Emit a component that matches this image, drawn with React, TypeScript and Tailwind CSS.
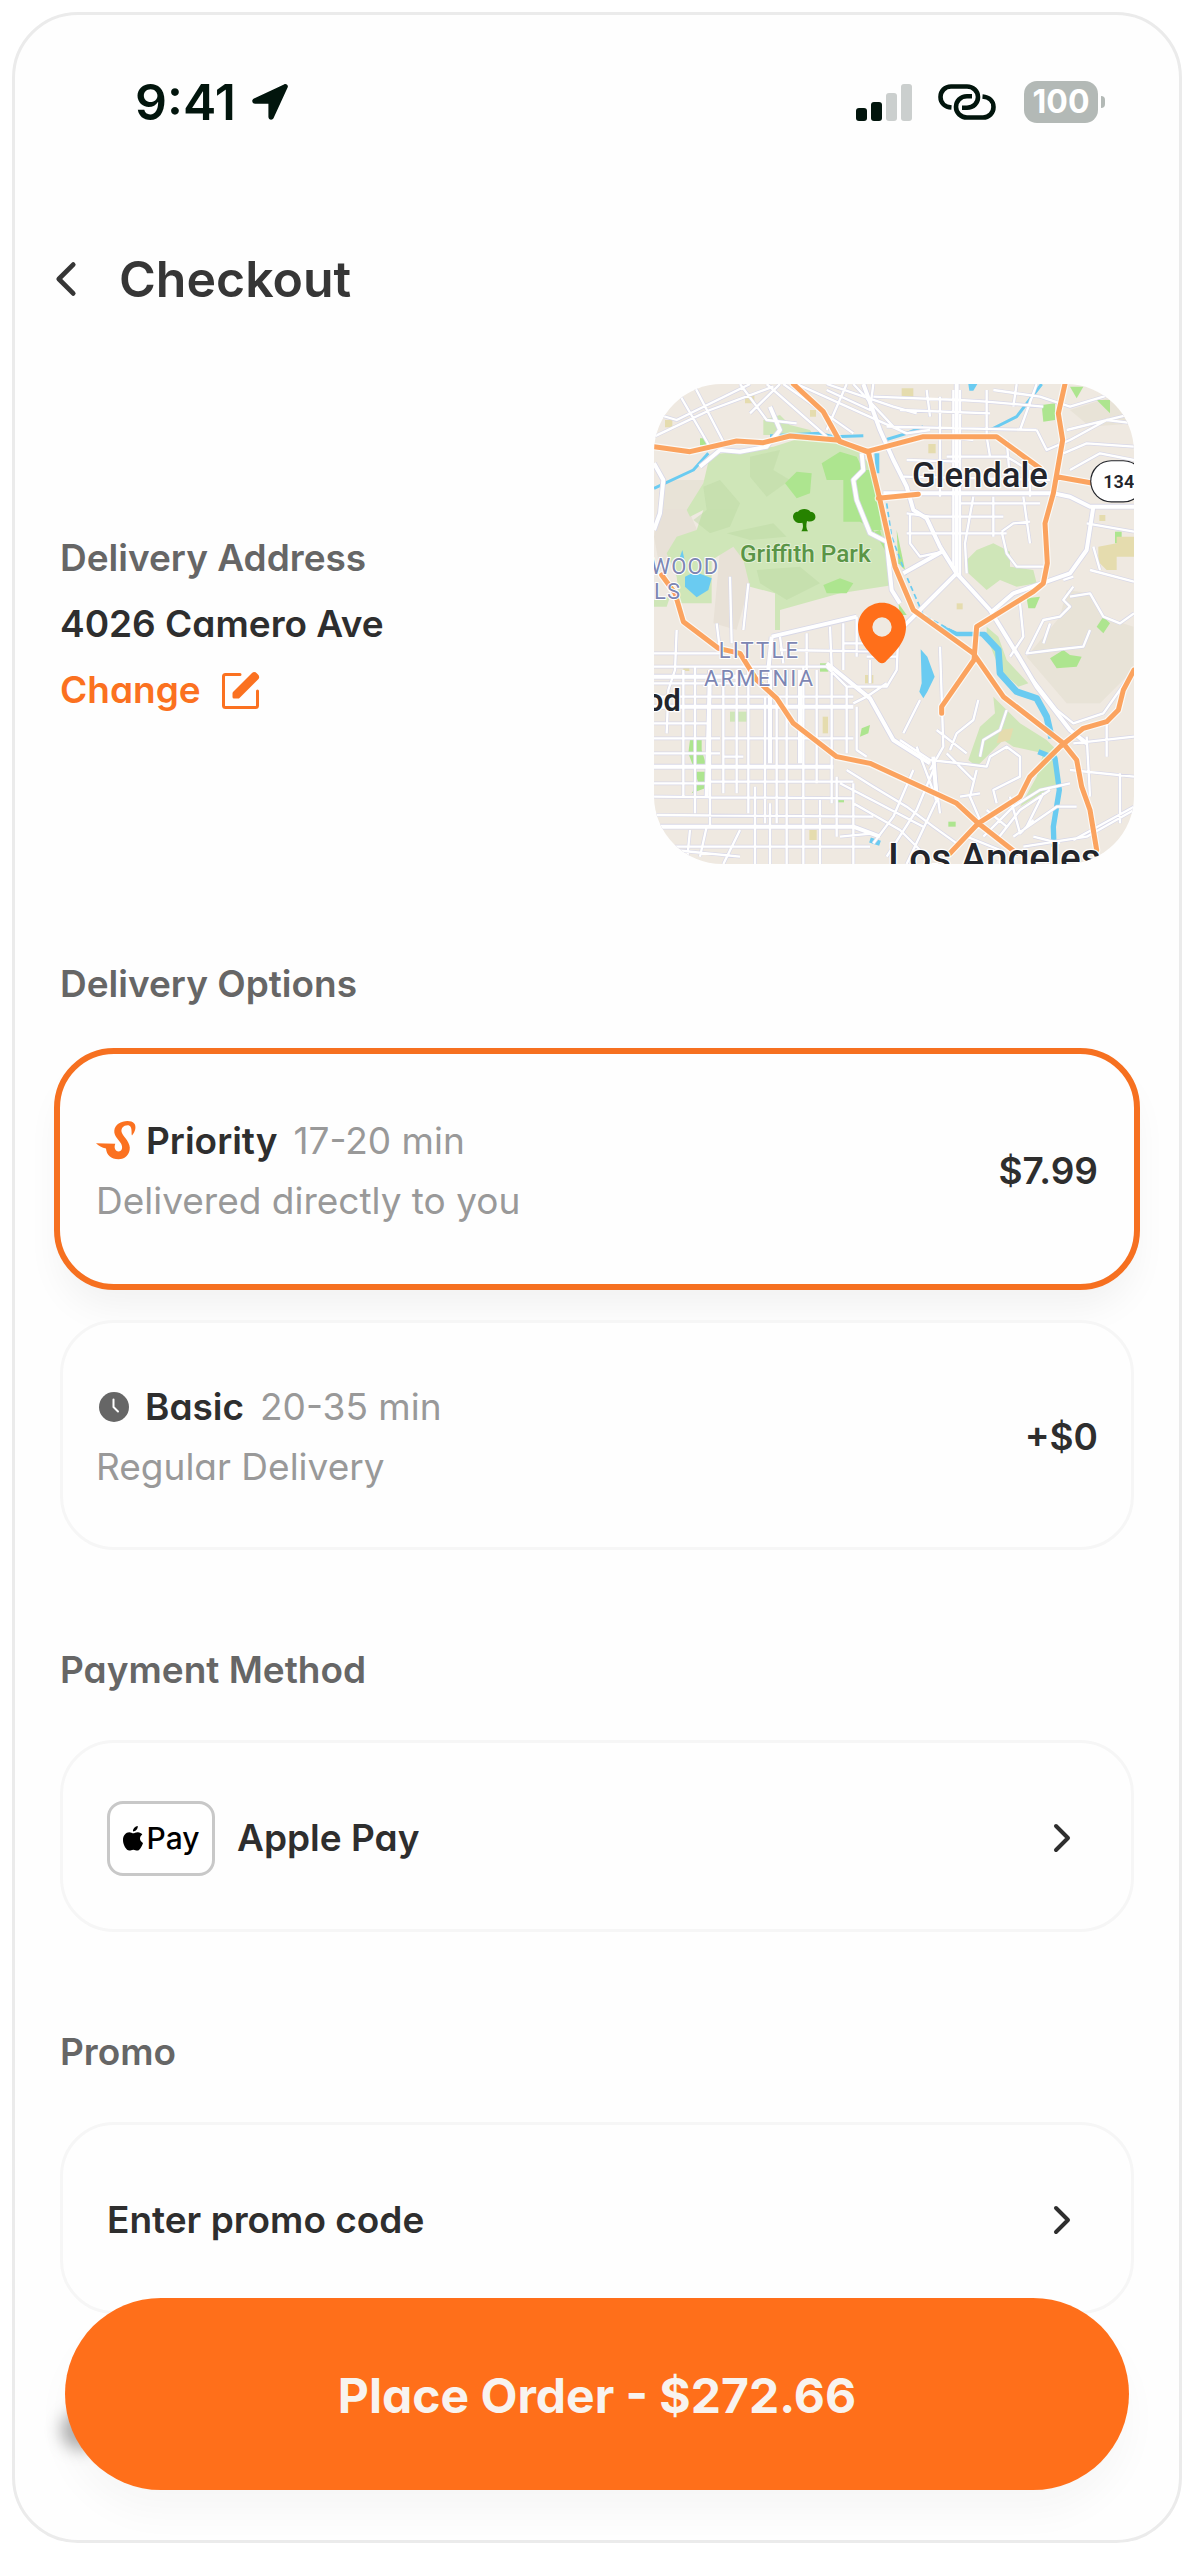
import { useState } from "react";
import type { ReactNode } from "react";

const minorRoads = [
  // northern streets
  "M42 130L110 150L330 42M100 42L215 240M160 42L250 215M42 200L210 120L400 50M300 42L380 150L470 160M380 42L560 200M430 42L640 190M330 130L420 42M470 42L800 190L870 180M560 42L760 110L830 130M620 42L560 180M640 42L760 170M700 42L690 120L560 60",
  "M700 80L960 90L1040 95L1100 100L1210 110M780 120L1050 130M740 170L1190 180M860 60L870 140M1040 60L1040 200M1130 42L1120 110M1190 42L1140 180M1060 60L1200 80L1290 110L1390 80L1482 42",
  "M1280 180L1482 130M1190 180L1220 240L1290 210L1400 150L1482 160M1270 250L1340 220L1482 230M1290 300L1380 250L1482 270",
  // Glendale grid
  "M790 320L1230 330M800 430L870 440L1090 440M800 490L1100 490M960 400L1200 400M1000 380L975 520L980 610M1060 380L1060 500M1150 380L1170 520M1085 485L1120 460L1170 455M1085 485L1100 550L1130 590L1210 590M810 430L810 520L840 560L910 545",
  "M900 80L900 380M960 60L960 620M940 60L940 600M920 200L1000 210M920 260L1100 260L1150 290M800 270L960 275M1040 200L1050 260M1100 210L1110 330M1170 300L1170 380",
  // eastern hills
  "M1300 650L1270 690L1290 710L1260 740L1210 750L1160 850L1240 840L1330 830L1350 780M1290 680L1350 670L1390 740L1440 760L1482 730M1350 600L1482 635M1340 460L1482 485M1360 530L1380 600M1140 700L1150 800L1110 860M1210 820L1230 760M1060 740L1140 690",
  "M1180 930L1250 1020L1300 1060L1390 1030L1482 900M1300 620L1270 630M1400 1060L1400 1160M1340 1100L1350 1280M1300 1120L1482 1100M1290 1200L1482 1220M1440 1210L1440 1360M1300 1410L1482 1310",
  // central blocks
  "M270 620L275 820M325 640L310 780M110 780L105 900L85 960L80 1090M230 760L240 840M42 850L240 850M42 890L560 890M42 940L330 940M42 980L640 980M42 1060L210 1060M42 1105L240 1105M250 1105L640 1105M42 1150L240 1150M250 1160L310 1160M42 1280L640 1285M42 1335L700 1340M42 1240L200 1240",
  "M420 800L430 880M500 790L500 900M570 770L575 890M610 760L610 900M650 740L650 860M680 860L770 860M420 840L740 845M610 820L680 820M560 890L620 950L700 950L740 950L770 900L775 790M690 870L690 940M640 1000L680 980L740 940",
  "M130 900L130 1280M165 890L165 1330M210 960L210 1370M250 900L250 1270M290 900L290 1270M325 900L325 1330M375 980L375 1360M410 990L410 1360M440 900L440 1330M490 890L490 1350M530 900L530 1240M575 900L575 1300M620 950L620 1150M650 1010L650 1140L680 1160",
  "M200 1235L640 1235M345 1250L345 1482M390 1300L390 1482M440 1310L440 1482M490 1280L490 1482M540 1290L540 1482M590 1220L590 1400M640 1240L640 1482M42 1430L690 1430M150 1380L140 1482M200 1370L180 1460M100 1440L300 1460M300 1380L250 1482M600 1400L700 1390",
  // silver lake and Echo Park
  "M840 990L790 1090M900 830L910 1130L870 1200M1015 990L1000 1050L950 1090L930 1140M1100 1020L1080 1080L1030 1110L1020 1160M780 1110L870 1170L960 1180L1040 1190L1050 1160L1100 1130L1140 1160L1140 1220L1060 1260L1070 1300M890 1080L980 1150M830 1130L890 1290M880 1180L900 1330",
  "M620 1200L700 1250L800 1310L880 1370L950 1420M600 1240L850 1370M640 1300L780 1380L840 1440M700 1420L760 1340L820 1200M740 1460L830 1320L880 1200M800 1482L900 1270M1010 1200L990 1280L1020 1350M920 1150L1000 1230M960 1280L1020 1270",
  "M1110 1280L1140 1390L1180 1350M1030 1400L1120 1310L1200 1260L1290 1240M1070 1410L1140 1320L1230 1260M1160 1370L1210 1270M1120 1400L1250 1310L1310 1310M1180 1400L1260 1420M1150 1430L1340 1400L1482 1320M1040 1320L1100 1370M980 1400L1080 1440",
];

const majorRoads = [
  "M42 280L70 330L60 430L42 480M390 110L420 180L380 230L300 245L240 240L180 290",
  "M670 42L720 180L760 270L800 350L820 420L860 445L900 530L950 610L1050 720L1130 850L1190 950L1290 1080L1340 1120",
  "M730 370L1240 370L1290 380L1350 410L1482 410M1360 410L1340 540L1290 610L1120 670L1050 730",
  "M665 250L670 300L640 330L650 390L690 490L740 515L755 660L780 700M950 610L840 720L770 790M905 545L790 610M950 42L950 610",
  "M395 800L650 740M395 800L385 900M560 880L690 985L760 1110L870 1180M42 920L380 920M42 1010L640 1010M42 1190L580 1190M42 1370L640 1370L720 1400M390 900L390 1180M210 900L200 1280M480 900L480 1180M880 1160L890 1290",
];

const freeways = [
  "M42 230L150 245L290 213L370 218L450 198L590 210L680 245L850 200L1070 200L1200 295",
  "M460 42L550 125L600 215L685 245L720 390L765 590L820 720L1000 850L1090 980L1270 1120L1310 1170L1325 1250L1350 1320L1370 1440",
  "M1275 42L1255 130L1268 210L1240 370L1215 460L1222 580L1210 640L1180 665L1010 770L1002 870L905 1010L905 1030",
  "M715 385L835 373M1250 320L1360 340",
  "M65 615L105 670L130 755L235 835L300 850L350 930L410 985L460 1060L590 1160L690 1180L950 1300L1015 1360L1130 1450",
  "M1482 900L1450 960L1435 1020L1400 1055L1330 1075L1260 1130L1170 1220L1140 1280L1015 1360L930 1450",
];

const sandPatches = [
  "M315 75h28v25h-28z", "M785 55h35v25h-35z", "M75 150h22v22h-22z", "M865 222h22v28h-22z",
  "M1375 530L1430 520V500H1482V560H1430V600H1400L1375 575Z", "M130 885h18v18h-18z",
  "M548 1040h16v50h-16z", "M675 915h25v25h-25z", "M1080 1080L1120 1075L1110 1110L1070 1120Z",
  "M508 1380h22v30h-22z", "M950 700h18v18h-18z", "M1378 435h18v18h-18z", "M510 120h18v20h-18z",
];

const parkPatches = [
  "M370 150L420 135L450 165L510 180L520 195L370 195Z",
  "M980 570L1010 540L1060 520L1110 545L1110 590L1180 600L1190 640L1130 650L1080 630L1040 660L985 610Z",
  "M1060 980L1140 1060L1220 1110L1250 1140L1255 1240L1140 1310L1190 1220L1210 1150L1120 1130L1090 1110L1010 1190L985 1170L1020 1070L1065 1030Z",
  "M270 1025h50v30h-50z",
  "M1040 770L1075 800L1100 870L1165 940L1135 950L1080 900L1040 800Z",
];

const brightPatches = [
  "M545 280L600 245L650 260L670 300L640 330L650 390L690 490L720 480L740 550L700 480L660 455H610V330H560Z",
  "M435 340L470 305L515 310L510 370L470 385Z",
  "M670 300L700 300L725 480L690 480L650 390L645 340Z",
  "M550 645L600 625L640 640L620 670H560Z",
  "M1205 105L1245 100V150L1210 155Z", "M1290 50L1330 50L1310 85Z", "M1370 90L1410 90V130Z",
  "M1160 685L1200 680L1185 715H1165Z", "M1230 865L1270 840L1290 855L1325 860L1310 890L1250 895Z",
  "M1370 770L1390 740L1410 760L1390 790Z", "M665 1075L690 1065L685 1090L660 1100Z",
  "M150 1110H185V1140L200 1190H160L145 1150Z", "M165 1205H200L195 1255L155 1270L175 1240Z",
  "M540 880h25v25h-25z", "M775 700L800 735H780Z", "M770 480L795 600L775 580Z", "M590 1285h22v12h-22z",
  "M1425 485h20v35h-20z", "M925 1355h22v15h-22z", "M180 205h20v20h-20z",
];

function MapPicture() {
  return (
    <svg viewBox="42 42 1440 1440" className="block size-full" role="img" aria-label="Map of the delivery address">
      <rect x="42" y="42" width="1440" height="1440" fill="#efe9e1" />
      <g fill="#e6dfd3" opacity="0.7">
        <path d="M70 330L200 330L150 430L180 500L60 600L42 500Z" />
        <path d="M1280 660L1350 670L1390 740L1480 770V900L1380 1000L1280 1000L1160 860L1260 740Z" />
        <path d="M1290 120L1482 60V160L1350 170Z" />
        <path d="M240 540L300 520L330 640L290 780L220 760Z" />
      </g>
      <path
        fill="#cfe6b8"
        d="M210 255L400 230L480 205L590 215L660 245L700 300L730 480L745 520L760 645L600 670L420 720V780H405V670L330 650L310 570L280 530L215 570V700H120L110 620L80 550L110 500L170 480L190 420L150 440L140 420L190 340Z"
      />
      <g fill="#bcd9a4" opacity="0.45">
        <path d="M190 350L240 330L300 400L270 470L210 490L160 450L200 420Z" />
        <path d="M330 260L420 240L400 300L450 330L380 380L330 320Z" />
        <path d="M350 600L480 590L540 640L440 690L360 640Z" />
        <path d="M260 490L400 460L440 500L330 510Z" />
      </g>
      <path fill="#cfe6b8" d="M42 690L90 680L80 710H42Z" />
      <g fill="#cfe6b8">{parkPatches.map((d) => <path key={d} d={d} />)}</g>
      <g fill="#ade58f">{brightPatches.map((d) => <path key={d} d={d} />)}</g>
      <g fill="#e5dcae">{sandPatches.map((d) => <path key={d} d={d} />)}</g>

      <g fill="#6acbf1">
        <path d="M135 620L165 605L215 625L205 660L170 682L135 650Z" />
        <path d="M120 560L127 540L135 575Z" />
        <path d="M842 838L862 860L884 920L862 965L850 985L838 965L845 940Z" />
        <path d="M985 42H1012L1000 62H988Z" />
        <path d="M703 250H718V310H708Z" />
      </g>
      <g fill="none" stroke="#6acbf1" strokeLinejoin="round">
        <path strokeWidth="9" d="M42 355L160 300L205 250M390 197L540 190L580 200L670 197M735 210L800 190L850 170M1050 180L1130 140L1205 42" />
        <path strokeWidth="5" strokeDasharray="16 10" d="M740 400L755 500L800 620L850 735L950 790" />
        <path strokeWidth="13" d="M900 770L950 792L1035 792" />
        <path strokeWidth="20" d="M1030 792L1075 840L1080 910L1130 965L1190 985L1220 1040L1235 1105" />
        <path strokeWidth="16" d="M1195 1145L1245 1165L1258 1260L1240 1370L1242 1430M690 1410L720 1420" />
      </g>

      <g fill="none" stroke="#d8d8e8" strokeLinejoin="round">
        <path d={minorRoads.join("")} strokeWidth="11" />
        <path d={majorRoads.join("")} strokeWidth="17" />
      </g>
      <g fill="none" stroke="#fff" strokeLinejoin="round">
        <path d={minorRoads.join("")} strokeWidth="7" />
        <path d={majorRoads.join("")} strokeWidth="12" />
      </g>
      <g fill="none" strokeLinejoin="round" strokeLinecap="round">
        <path d={freeways.join("")} stroke="#fff" strokeWidth="22" opacity="0.7" />
        <path d={freeways.join("")} stroke="#fba35f" strokeWidth="15" />
      </g>

      <g fill="#268200">
        <path d="M484 484C490 475 490 466 487 458C475 462 460 455 459 440C459 430 468 424 474 425C480 415 505 414 511 425C522 425 528 435 526 444C524 453 512 457 501 453C498 465 498 476 504 484Z" />
      </g>

      <g fontFamily='Roboto, "Liberation Sans", sans-serif' strokeLinejoin="round" paintOrder="stroke">
        <text x="816" y="350" fontSize="104" fontWeight="500" fill="#23252b" stroke="#fff" strokeWidth="8">Glendale</text>
        <text x="300" y="575" fontSize="73" fontWeight="500" fill="#5a9546" stroke="#e3f0d6" strokeWidth="6">Griffith Park</text>
        <g fontSize="66" fill="#7d86b3" stroke="#fff" strokeWidth="6">
          <text x="32" y="611" className="tracking-wider">WOOD</text>
          <text x="42" y="687" className="tracking-wider">LS</text>
          <text x="236" y="865" className="tracking-widest">LITTLE</text>
          <text x="192" y="947" className="tracking-widest">ARMENIA</text>
        </g>
        <text x="122" y="1024" fontSize="92" fontWeight="600" fill="#23252b" stroke="#fff" strokeWidth="8" textAnchor="end">od</text>
        <text x="745" y="1502" fontSize="116" fontWeight="500" fill="#23252b" stroke="#fff" strokeWidth="8">Los Angeles</text>
        <rect x="1354" y="274" width="156" height="120" rx="60" fill="#fff" stroke="#23252b" strokeWidth="7" />
        <text x="1390" y="354" fontSize="54" fontWeight="600" fill="#23252b">134</text>
      </g>

      <path
        fill="#ff6f1a"
        fillRule="evenodd"
        d="M726 698C686 698 654 730 654 770C654 818 690 848 716 876Q726 884 736 876C762 848 798 818 798 770C798 730 766 698 726 698ZM726 742A29 29 0 1 1 726 800A29 29 0 1 1 726 742Z"
      />
    </svg>
  );
}

function StatusBar() {
  return (
    <div className="flex items-center justify-between pr-[74px] pl-[120px] text-[#02150d]">
      <div className="flex items-center gap-4">
        <span className="text-[50px] leading-[60px] font-semibold">9:41</span>
        <svg viewBox="0 0 36 36" className="size-9" fill="currentColor" aria-hidden="true">
          <path d="M35.6 3.6L21.6 34C20.4 36.8 16.4 36 16.4 32.8V19.8H3.2C0 19.8-.9 15.8 2 14.4L32 .4C34.4-.7 36.7 1.4 35.6 3.6Z" />
        </svg>
      </div>
      <div className="flex items-center">
        <svg viewBox="0 0 56 37" className="mr-[26px] h-[37px] w-14" fill="currentColor" aria-label="Signal strength">
          <rect y="24" width="11" height="13" rx="3" />
          <rect x="15" y="18" width="11" height="19" rx="3" />
          <rect x="30" y="9" width="11" height="28" rx="3" opacity="0.2" />
          <rect x="45" width="11" height="37" rx="3" opacity="0.2" />
        </svg>
        <svg viewBox="0 0 58 36" className="mr-7 h-9 w-[58px]" fill="none" stroke="currentColor" strokeWidth="4.6" aria-label="Linked">
          <path d="M13.5 23.5C7 23 2.5 19 2.5 13C2.5 7 7 2.500 13 2.500H29C35 2.500 40 7 40 13C40 19 35.500 23.800 29 23.800H24" />
          <path d="M44.5 12.5C51 13 55.5 17 55.5 23C55.5 29 51 33.5 45 33.5H29C23 33.5 18 29 18 23C18 17 22.5 12.2 29 12.2H34" />
        </svg>
        <div className="flex items-center gap-[3px]">
          <span className="flex h-[42px] w-[74px] items-center justify-center rounded-[13px] bg-[#b3b9b6] text-[32px] leading-[42px] font-bold text-white">
            100
          </span>
          <span className="h-3 w-1 rounded-r-full bg-[#b3b9b6]" />
        </div>
      </div>
    </div>
  );
}

function Chevron({ className }: { className: string }) {
  return (
    <svg viewBox="0 0 18 30" className={className} fill="none" stroke="currentColor" strokeWidth="4" strokeLinecap="round" strokeLinejoin="round" aria-hidden="true">
      <path d="M3 3L15 15L3 27" />
    </svg>
  );
}

function SwiftIcon() {
  return (
    <svg viewBox="-1 0 42 40" className="h-10 w-[42px]" fill="#fb7120" aria-hidden="true">
      <path d="M-1 22.3L18.300 22.800C16.600 27 18.400 30.300 21.500 30.500C25 30.500 26.200 26.500 24 22.500C21.500 18.500 16.800 15 17.300 9.500C18 3.500 24 0 30.500 0C36.500 0 39.300 3.200 38.300 8C37.800 10.500 36.600 12.800 35 14.500C34.500 13.500 34.600 12.500 34.600 11C34.600 6.500 33.500 4.200 30.500 4.200C26.500 4.200 23.800 7.500 24.600 11C25.500 15 32.500 20 32.800 26.500C33 33.500 28 38.300 21.500 38.300C14 38.300 9.500 34 9 27.500C5 26.800 1.500 25 -1 22.300Z" />
    </svg>
  );
}

function ClockIcon() {
  return (
    <svg viewBox="0 0 30 30" className="mr-2 ml-[3px] size-[30px]" aria-hidden="true">
      <circle cx="15" cy="15" r="15" fill="#666" />
      <path d="M14.5 7.5V15L19 19.5" fill="none" stroke="#fff" strokeWidth="2" strokeLinecap="round" strokeLinejoin="round" />
    </svg>
  );
}

function EditIcon() {
  return (
    <svg viewBox="0 0 40 40" className="size-10" aria-hidden="true">
      <path d="M19 4.5H4.5Q2.5 4.5 2.5 6.5V35.5Q2.5 37.5 4.5 37.5H34.5Q36.5 37.5 36.5 35.5V21" fill="none" stroke="#fb7120" strokeWidth="3" strokeLinecap="round" />
      <path d="M12 22L31 3Q33.5 1 36 3.5Q39.5 6.5 37.5 9L18.5 28Q18 28.500 17 28.500H13Q11.500 28.500 11.500 27V23.500Q11.500 22.500 12 22Z" fill="#fb7120" />
    </svg>
  );
}

function AppleIcon() {
  return (
    <svg viewBox="0 0 20 25" className="h-[25px] w-5" fill="#000" aria-hidden="true">
      <path d="M14.8 0C15 2.7 12.8 5.4 10 5.4C9.7 2.8 12.2.3 14.8 0ZM19.3 8.6C16 10.7 16.3 15.3 20 16.9C19 20 16.8 24.5 14.2 24.6C12.6 24.6 12.2 23.7 10.3 23.7C8.4 23.7 7.9 24.6 6.4 24.6C3.5 24.7 0 19.2 0 14C0 9.3 3 6.3 6.2 6.2C7.9 6.2 9.3 7.3 10.3 7.3C11.2 7.3 13 6 15 6.2C16.7 6.3 18.3 7 19.3 8.6Z" />
    </svg>
  );
}

function SectionTitle({ children }: { children: ReactNode }) {
  return <h2 className="font-semibold text-[#666]">{children}</h2>;
}

interface Option {
  id: string;
  name: string;
  time: string;
  note: string;
  price: string;
  icon: ReactNode;
}

const options: Option[] = [
  { id: "priority", name: "Priority", time: "17-20 min", note: "Delivered directly to you", price: "$7.99", icon: <SwiftIcon /> },
  { id: "basic", name: "Basic", time: "20-35 min", note: "Regular Delivery", price: "+$0", icon: <ClockIcon /> },
];

export default function App() {
  const [selected, setSelected] = useState("priority");

  return (
    <div className="bg-white py-3 pr-2.5 pl-3 font-[Inter,'Liberation_Sans',sans-serif] text-[37px] leading-[46px] text-[#2e2e2e] [font-feature-settings:'cv11']">
      <div className="relative overflow-hidden rounded-[66px] border-[3px] border-[#ebebeb] bg-[#fefefe] pt-[57px] pb-[226px]">
        <StatusBar />

        <header className="mt-[117px] flex items-center gap-[42px] pl-10">
          <button type="button" aria-label="Back" className="text-[#363636]">
            <Chevron className="h-9 w-[22px] rotate-180" />
          </button>
          <h1 className="text-[50px] leading-[60px] font-semibold text-[#363636]">Checkout</h1>
        </header>

        <main className="px-[45px]">
          <section className="mt-[75px] flex items-center justify-between">
            <div className="flex flex-col items-start gap-5">
              <SectionTitle>Delivery Address</SectionTitle>
              <p className="font-semibold">4026 Camero Ave</p>
              <button type="button" className="flex items-center gap-5 font-semibold text-[#fb7120]">
                Change
                <EditIcon />
              </button>
            </div>
            <div className="size-[480px] overflow-hidden rounded-[68px]">
              <MapPicture />
            </div>
          </section>

          <section className="mt-[97px]">
            <SectionTitle>Delivery Options</SectionTitle>
            <div className="mt-[47px] flex flex-col gap-9" role="radiogroup" aria-label="Delivery Options">
              {options.map((option) => (
                <label
                  key={option.id}
                  htmlFor={option.id}
                  className={
                    selected === option.id
                      ? "relative flex h-[230px] cursor-pointer items-center justify-between rounded-[54px] bg-[#fefefe] px-9 pt-1 shadow-[0_24px_36px_rgba(0,0,0,0.05)] outline-6 outline-[#f67020]"
                      : "relative flex h-[230px] cursor-pointer items-center justify-between rounded-[54px] border-[3px] border-[#f6f6f6] bg-[#fefefe] px-[33px] pt-1"
                  }
                >
                  <input
                    id={option.id}
                    type="radio"
                    name="delivery"
                    className="sr-only"
                    checked={selected === option.id}
                    onChange={() => setSelected(option.id)}
                  />
                  <span className="flex flex-col gap-[14px] text-[#999]">
                    <span className="flex items-center">
                      {option.icon}
                      <span className="mr-4 ml-2 font-semibold text-[#2e2e2e]">{option.name}</span>
                      {option.time}
                    </span>
                    <span>{option.note}</span>
                  </span>
                  <span className="font-semibold">{option.price}</span>
                </label>
              ))}
            </div>
          </section>

          <section className="mt-[97px]">
            <SectionTitle>Payment Method</SectionTitle>
            <button type="button" className="mt-[47px] flex h-48 w-full items-center rounded-[54px] border-[3px] border-[#f6f6f6] pt-1 pr-[60px] pl-11 text-left font-semibold">
              <span className="mr-[22px] flex h-[75px] w-[108px] items-center justify-center gap-1 rounded-[16px] border-[3px] border-[#c8c8c8] bg-white text-[30px] leading-9 font-medium text-black [font-feature-settings:normal]">
                <AppleIcon />
                Pay
              </span>
              Apple Pay
              <Chevron className="ml-auto h-[30px] w-[18px]" />
            </button>
          </section>

          <section className="mt-[97px]">
            <SectionTitle>Promo</SectionTitle>
            <button type="button" className="mt-[47px] flex h-48 w-full items-center justify-between rounded-[54px] border-[3px] border-[#f6f6f6] pt-1 pr-[60px] pl-11 text-left font-semibold">
              Enter promo code
              <Chevron className="h-[30px] w-[18px]" />
            </button>
          </section>
        </main>

        <div className="absolute inset-x-[50px] bottom-[50px]">
          <span className="absolute bottom-10 -left-1 size-10 rounded-full bg-black/30 blur-[8px]" />
          <button type="button" className="relative h-48 w-full rounded-full bg-[#ff6f1a] pt-1 text-[48px] leading-[60px] font-bold text-[#f8f3ef] shadow-[0_24px_36px_rgba(0,0,0,0.03)]">
            Place Order - $272.66
          </button>
        </div>
      </div>
    </div>
  );
}
